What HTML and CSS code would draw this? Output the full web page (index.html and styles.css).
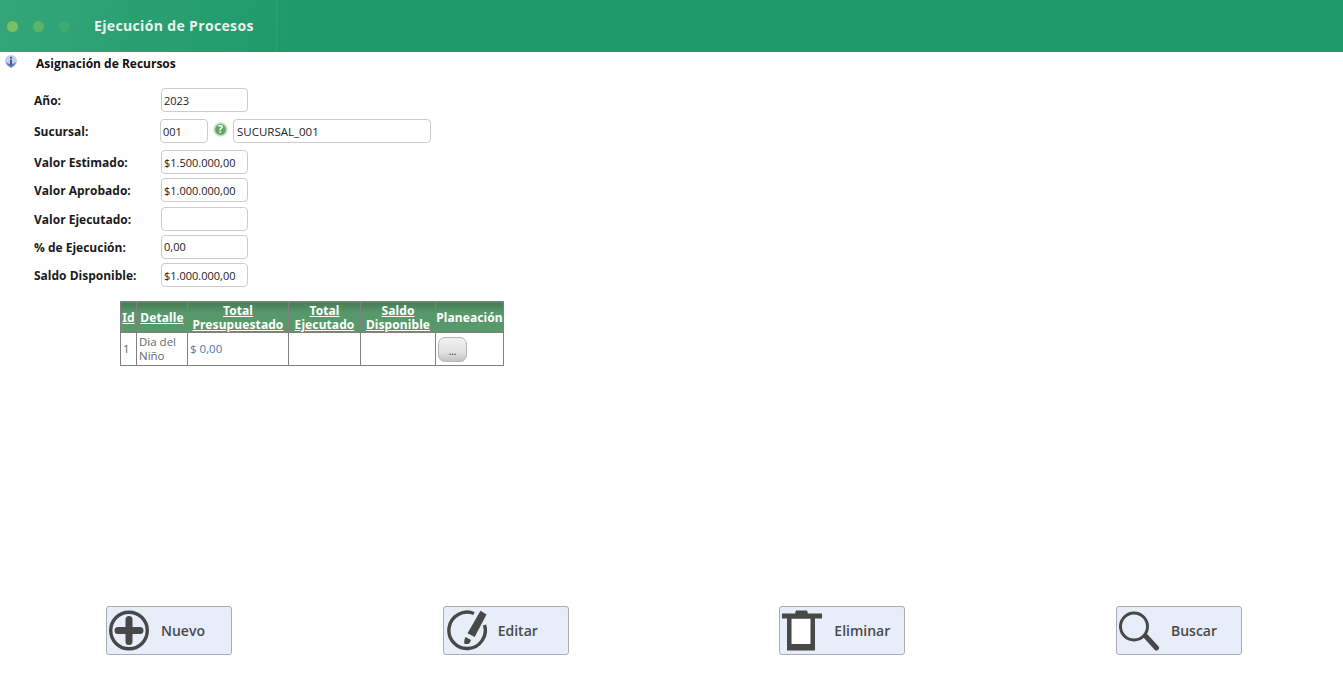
FILE: index.html
```html
<!DOCTYPE html>
<html lang="es">
<head>
<meta charset="utf-8">
<title>Ejecución de Procesos</title>
<link rel="stylesheet" href="styles.css">
</head>
<body>
<div class="page">
  <header class="topbar">
    <div class="dots"><span class="dot d1"></span><span class="dot d2"></span><span class="dot d3"></span></div>
    <h1 class="title">Ejecución de Procesos</h1>
  </header>
  <main class="content">
    <div class="section">
      <svg class="info" width="14" height="14" viewBox="0 0 14 14"><circle cx="7" cy="6" r="6" fill="#c3d0ea"/><path d="M1.500 7Q4 9 7 9t5.500-2Q11 10 7 13 3 10 1.500 7z" fill="#5f7ab5"/><rect x="6" y="4.500" width="2" height="5.500" fill="#3d5a9c"/><rect x="6" y="1.800" width="2" height="1.800" fill="#3d5a9c"/></svg>
      <h2 class="section-title">Asignación de Recursos</h2>
    </div>
    <form class="form">
      <div class="row row-wide"><label class="lbl">Año:</label><input class="inp" value="2023"></div>
      <div class="row row-wide"><label class="lbl">Sucursal:</label><input class="inp inp-code" value="001">
        <svg class="help" width="15" height="15" viewBox="0 0 15 15"><circle cx="7.500" cy="7.500" r="7.200" fill="#c6e0c6"/><circle cx="7.500" cy="7.500" r="5.400" fill="#5fa566"/><text x="7.500" y="11" class="help-q" text-anchor="middle">?</text></svg>
        <input class="inp inp-name" value="SUCURSAL_001"></div>
      <div class="row"><label class="lbl">Valor Estimado:</label><input class="inp" value="$1.500.000,00"></div>
      <div class="row"><label class="lbl">Valor Aprobado:</label><input class="inp" value="$1.000.000,00"></div>
      <div class="row"><label class="lbl">Valor Ejecutado:</label><input class="inp" value=""></div>
      <div class="row"><label class="lbl">% de Ejecución:</label><input class="inp" value="0,00"></div>
      <div class="row"><label class="lbl">Saldo Disponible:</label><input class="inp" value="$1.000.000,00"></div>
    </form>
    <table class="grid">
      <thead>
        <tr>
          <th class="c1"><a>Id</a></th>
          <th class="c2"><a>Detalle</a></th>
          <th class="c3"><a>Total Presupuestado</a></th>
          <th class="c4"><a>Total Ejecutado</a></th>
          <th class="c5"><a>Saldo Disponible</a></th>
          <th class="c6">Planeación</th>
        </tr>
      </thead>
      <tbody>
        <tr>
          <td>1</td>
          <td>Dia del Niño</td>
          <td class="money">$ 0,00</td>
          <td></td>
          <td></td>
          <td><button class="dots-btn" type="button">...</button></td>
        </tr>
      </tbody>
    </table>
  </main>
  <footer class="actions">
    <button class="action" type="button">
      <svg width="42" height="42" viewBox="0 0 42 42"><circle cx="21" cy="20.500" r="18.300" fill="none" stroke="#484848" stroke-width="3.400"/><path d="M21 9.500v22M10 20.500h22" stroke="#484848" stroke-width="7" stroke-linecap="round"/></svg>
      <span>Nuevo</span>
    </button>
    <button class="action" type="button">
      <svg width="42" height="42" viewBox="0 0 42 42"><path d="M29 3.500A18.200 18.200 0 1 0 39.500 15" fill="none" stroke="#484848" stroke-width="3.400"/><path d="M35.500 .8l6 3.700-11.800 22.500-7.200-3.800z" fill="#484848"/><path d="M20.500 27l5.500 3-1.500 3.200q-2.800 1.600-5.300 .3-.7-2.800 1.300-6.500z" fill="#484848"/></svg>
      <span>Editar</span>
    </button>
    <button class="action" type="button">
      <svg width="42" height="42" viewBox="0 0 42 42"><rect x="10.500" y="8" width="19" height="26" fill="#fff"/><path d="M1 3.500h13l1-3h11l1 3h14v5H1z" fill="#484848"/><path d="M6 8h28v32.500H6zM10.500 8.500v25.500h19v-25.500z" fill="#484848" fill-rule="evenodd"/></svg>
      <span>Eliminar</span>
    </button>
    <button class="action" type="button">
      <svg width="42" height="42" viewBox="0 0 42 42"><circle cx="16" cy="16.500" r="13.500" fill="none" stroke="#484848" stroke-width="3"/><path d="M28 26.500l10.500 11.500" stroke="#484848" stroke-width="5" stroke-linecap="round"/></svg>
      <span>Buscar</span>
    </button>
  </footer>
</div>
</body>
</html>
```
FILE: styles.css
```css
* { box-sizing: border-box; }
html, body { margin: 0; padding: 0; background: #fff; }
body { font-family: "Open Sans", "Noto Sans", sans-serif; color: #111; }
.page { width: 1343px; height: 681px; display: flex; flex-direction: column; overflow: hidden; }

.topbar {
  height: 52px; flex: none; display: flex; align-items: center;
  background: linear-gradient(100deg, #34a679 0, #1f9a69 22%, #1f9a69 100%);
}
.dots {
  display: flex; gap: 15px; padding-left: 7px; padding-right: 24px; align-items: center;
  margin-top: 1px;
}
.dot { width: 11px; height: 11px; border-radius: 50%; display: block; }
.d1 { background: #7cc062; }
.d2 { background: #59b468; }
.d3 { background: #3faa6d; }
.title {
  margin: 0; flex: 1; height: 52px;
  font: 700 14px/51px "Open Sans", sans-serif; color: #e9f5ee; letter-spacing: .35px;
  background: linear-gradient(#2ba274, #2ba274) 182px 0 / 1px 100% no-repeat;
}

.content { flex: 1; padding: 0; }
.section { display: flex; align-items: flex-start; height: 36px; padding-left: 4px; }
.info { margin-top: 3px; flex: none; }
.section-title { margin: 4px 0 0 18px; font: 700 12px/16px "Open Sans", sans-serif; color: #111; }

.form { padding-left: 34px; }
.row { display: flex; align-items: center; height: 24px; margin-bottom: 4.330px; }
.row-wide { margin-bottom: 7px; }
.lbl { width: 127px; flex: none; padding-top: 2px; font: 700 12px/16px "Open Sans", sans-serif; color: #1a1a1a; }
.inp {
  width: 87px; height: 24px; border: 1px solid #ccc; border-radius: 4px; padding: 0 2px;
  font: 400 11px "Open Sans", sans-serif; color: #222; background: #fff; outline: none;
}
.inp-code { width: 48px; margin-left: -1px; }
.help { margin: -4px 5px 0 5px; flex: none; }
.help-q { font: 700 10px "Open Sans", sans-serif; fill: #fff; }
.inp-name { width: 198px; padding-left: 3px; font-size: 11.500px; }

.grid {
  margin: 14px 0 0 120px; border-collapse: collapse; table-layout: fixed; width: 384px;
  font-family: "Noto Sans", sans-serif;
}
.grid th, .grid td { border: 1px solid #808080; }
.grid th {
  height: 31px; padding: 2px 0 0; font-size: 12px; line-height: 14px; font-weight: 700; color: #fff;
  letter-spacing: .1px;
  background: linear-gradient(#4b7b58 0, #57996a 35%, #57996a 100%);
}
.grid th a { text-decoration: underline; }
.c1 { width: 16px; } .c2 { width: 51px; } .c3 { width: 101px; } .c4 { width: 72px; } .c5 { width: 75px; } .c6 { width: 68px; }
.grid td {
  height: 33px; padding: 0 2px; font: 400 11.500px/14px "Open Sans", sans-serif; color: #666;
}
.grid td.money { color: #4a7ba6; }
.dots-btn {
  display: block; width: 29px; height: 25px; padding: 5px 0 0; border: 1px solid #b5b5b5; border-radius: 7px;
  background: linear-gradient(#f2f2f2, #e2e2e2 60%, #c4c4c4); font: 700 9px "Open Sans", sans-serif; color: #555;
}

.actions { flex: none; display: flex; justify-content: space-between; padding: 0 101px 26px 106px; }
.action {
  width: 126px; height: 49px; display: flex; align-items: center; gap: 11px; padding: 0 0 0 1px;
  background: #e7edf9; border: 1px solid #a9acb3; border-radius: 3px;
  font: 600 14px "Open Sans", sans-serif; color: #4a4a4a;
}
.action svg { flex: none; }
```
